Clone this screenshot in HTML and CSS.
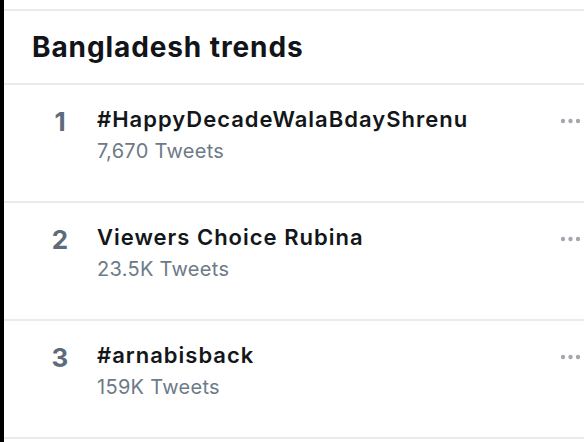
FILE: index.html
```html
<!DOCTYPE html>
<html lang="en">
<head>
    <meta charset="UTF-8">
    <meta name="viewport" content="width=device-width, initial-scale=1.0">
    <title>trends</title>
    <link rel="stylesheet" href="styles.css">
</head>
<body>
    <div class="frame">
        <div class="panel">
            <div class="heading">
                <h1>Bangladesh trends</h1>
            </div>

            <div class="trend">
                <div class="rank">1</div>
                <div class="info">
                    <div class="name">#HappyDecadeWalaBdayShrenu</div>
                    <div class="count">7,670 Tweets</div>
                </div>
                <svg class="more" width="24" height="6" viewBox="0 0 24 6">
                    <circle cx="3" cy="3" r="2.2"/>
                    <circle cx="10.5" cy="3" r="2.2"/>
                    <circle cx="18" cy="3" r="2.2"/>
                </svg>
            </div>

            <div class="trend">
                <div class="rank">2</div>
                <div class="info">
                    <div class="name">Viewers Choice Rubina</div>
                    <div class="count">23.5K Tweets</div>
                </div>
                <svg class="more" width="24" height="6" viewBox="0 0 24 6">
                    <circle cx="3" cy="3" r="2.2"/>
                    <circle cx="10.5" cy="3" r="2.2"/>
                    <circle cx="18" cy="3" r="2.2"/>
                </svg>
            </div>

            <div class="trend">
                <div class="rank">3</div>
                <div class="info">
                    <div class="name">#arnabisback</div>
                    <div class="count">159K Tweets</div>
                </div>
                <svg class="more" width="24" height="6" viewBox="0 0 24 6">
                    <circle cx="3" cy="3" r="2.2"/>
                    <circle cx="10.5" cy="3" r="2.2"/>
                    <circle cx="18" cy="3" r="2.2"/>
                </svg>
            </div>
        </div>
    </div>
</body>
</html>
```

FILE: styles.css
```css
*{
    padding: 0;
    margin: 0;
    box-sizing: border-box;
    font-family: "Inter", "Liberation Sans", sans-serif;
}
body{
    background: #fff;
    overflow: hidden;
}
.frame{
    height: 442px;
    border-left: 4px solid #000;
    padding-top: 9px;
}
.panel{
    border-top: 2px solid #ebebef;
}
.heading{
    height: 74px;
    padding: 19px 0 0 28px;
    border-bottom: 2px solid #ebebef;
}
.heading h1{
    font-size: 28px;
    line-height: 34px;
    font-weight: 700;
    letter-spacing: 0.9px;
    color: #111418;
}
.trend{
    display: flex;
    align-items: flex-start;
    height: 118px;
    padding: 21px 0 0 35px;
    border-bottom: 2px solid #ebebef;
}
.rank{
    width: 42px;
    text-align: center;
    font-size: 26px;
    line-height: 32px;
    font-weight: 700;
    color: #5e6b7a;
}
.info{
    margin-left: 16px;
}
.name{
    font-size: 22px;
    line-height: 27px;
    font-weight: 600;
    letter-spacing: 1px;
    color: #14171a;
}
.count{
    margin-top: 6px;
    font-size: 20px;
    line-height: 24px;
    letter-spacing: 0.3px;
    color: #6d7a88;
}
.more{
    margin-left: auto;
    margin-top: 12px;
    fill: #a3a8b0;
}
```
